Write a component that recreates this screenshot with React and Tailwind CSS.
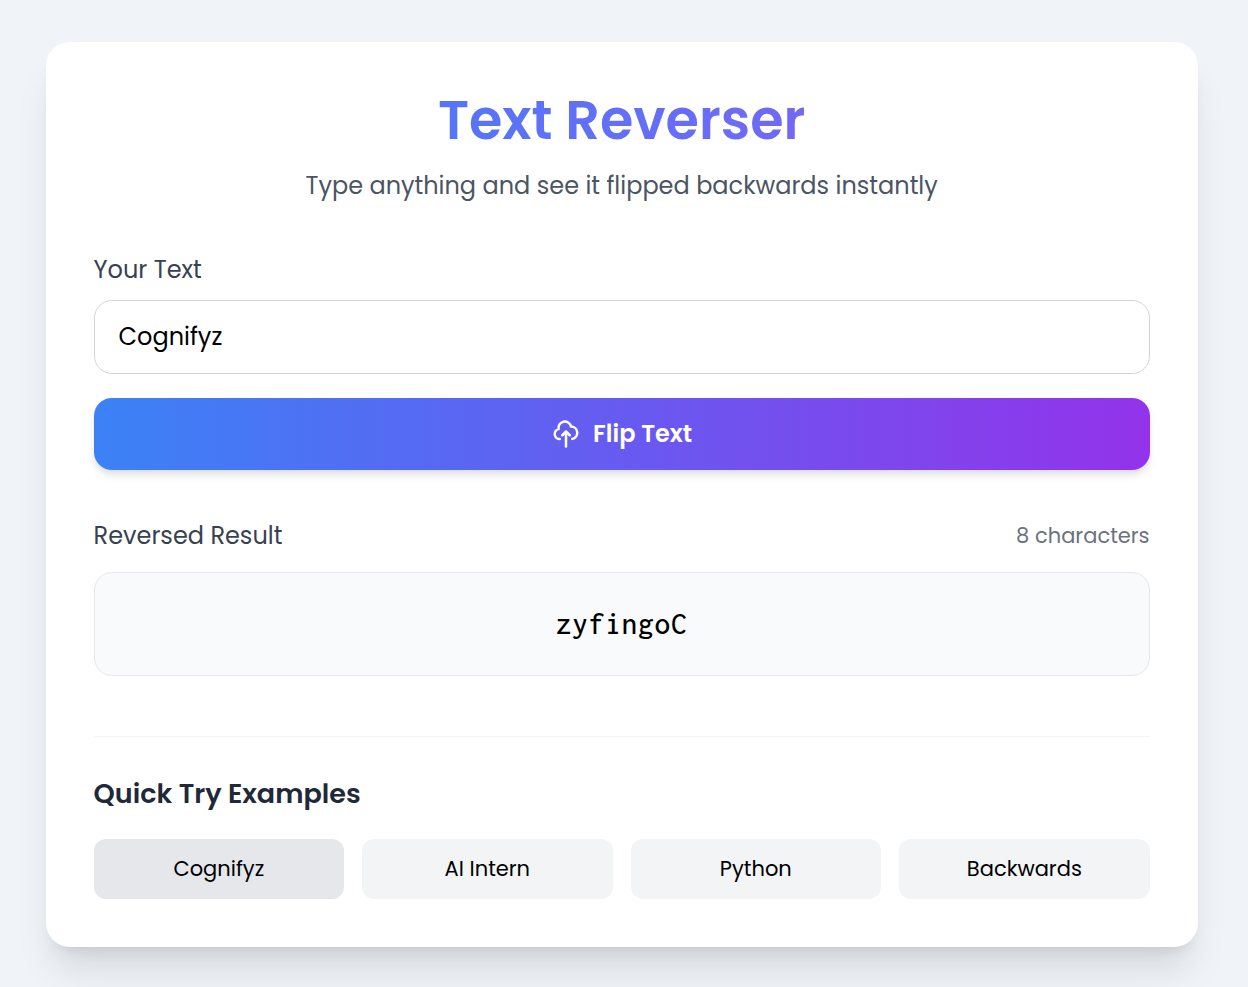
import { useState } from "react";

const examples = ["Cognifyz", "AI Intern", "Python", "Backwards"];

function CloudUploadIcon() {
  return (
    <svg className="mr-3 size-[30px]" fill="none" viewBox="0 0 24 24" stroke="currentColor" strokeWidth="2" strokeLinecap="round" strokeLinejoin="round">
      <path d="M7 16a4 4 0 01-.88-7.903A5 5 0 1115.9 6L16 6a5 5 0 011 9.9M15 13l-3-3m0 0l-3 3m3-3v12" />
    </svg>
  );
}

export default function App() {
  const [text, setText] = useState("Cognifyz");
  const [result, setResult] = useState("zyfingoC");
  const flip = (value) => setResult([...value].reverse().join(""));

  return (
    <div className="h-[987px] overflow-hidden bg-[#f0f4f8] pt-[42px] pl-[45.6px] font-[Poppins,Inter,sans-serif] text-black">
      <main className="h-[905px] w-[1152px] rounded-3xl bg-white p-12 shadow-[0_30px_37.5px_-7.5px_rgba(0,0,0,0.1),0_12px_15px_-9px_rgba(0,0,0,0.1)]">
        <header className="mb-12 text-center">
          <h1 className="mb-[18px] bg-linear-to-r/srgb from-[#3b82f6] to-[#8b5cf6] bg-clip-text text-[54px] leading-[60px] font-semibold text-transparent">
            Text Reverser
          </h1>
          <p className="text-2xl leading-9 text-[#4b5563]">Type anything and see it flipped backwards instantly</p>
        </header>

        <label htmlFor="source" className="mb-3 block text-2xl leading-9 text-[#374151]">Your Text</label>
        <input
          id="source"
          value={text}
          onChange={(e) => setText(e.target.value)}
          className="block h-[74px] w-full rounded-[18px] border border-[#d1d5db] px-6 pb-[2px] text-2xl outline-none"
        />
        <button
          onClick={() => flip(text)}
          className="mt-6 flex h-[72px] w-full items-center justify-center rounded-[18px] bg-linear-to-r/srgb from-[#3b82f6] to-[#9333ea] text-2xl font-semibold text-white shadow-[0_6px_9px_-1.5px_rgba(0,0,0,0.1),0_3px_6px_-3px_rgba(0,0,0,0.1)]"
        >
          <CloudUploadIcon />
          <span>Flip Text</span>
        </button>

        <section className="mt-12">
          <div className="mb-[18px] flex h-9 items-center justify-between">
            <h2 className="text-2xl text-[#374151]">Reversed Result</h2>
            <span className="text-[21px] text-[#6b7280]">{result.length} characters</span>
          </div>
          <div className="flex h-[104px] items-center justify-center rounded-[18px] border border-[#e5e7eb] bg-[#f9fafb] font-[Consolas,Inconsolata,'DejaVu_Sans_Mono',monospace] text-[31.5px] font-[450] tracking-[0.7px]">
            <span>{result}</span>
          </div>
        </section>

        <section className="mt-[60px] border-t border-[#f3f4f6] pt-9">
          <h3 className="mb-6 text-[27px] leading-[42px] font-semibold text-[#1f2937]">Quick Try Examples</h3>
          <div className="grid grid-cols-4 gap-[18px]">
            {examples.map((item, i) => (
              <button
                key={item}
                onClick={() => {
                  setText(item);
                  flip(item);
                }}
                className={`h-[60px] rounded-xl text-[21px] ${i === 0 ? "bg-[#e5e7eb]" : "bg-[#f3f4f6]"}`}
              >
                {item}
              </button>
            ))}
          </div>
        </section>
      </main>
    </div>
  );
}
